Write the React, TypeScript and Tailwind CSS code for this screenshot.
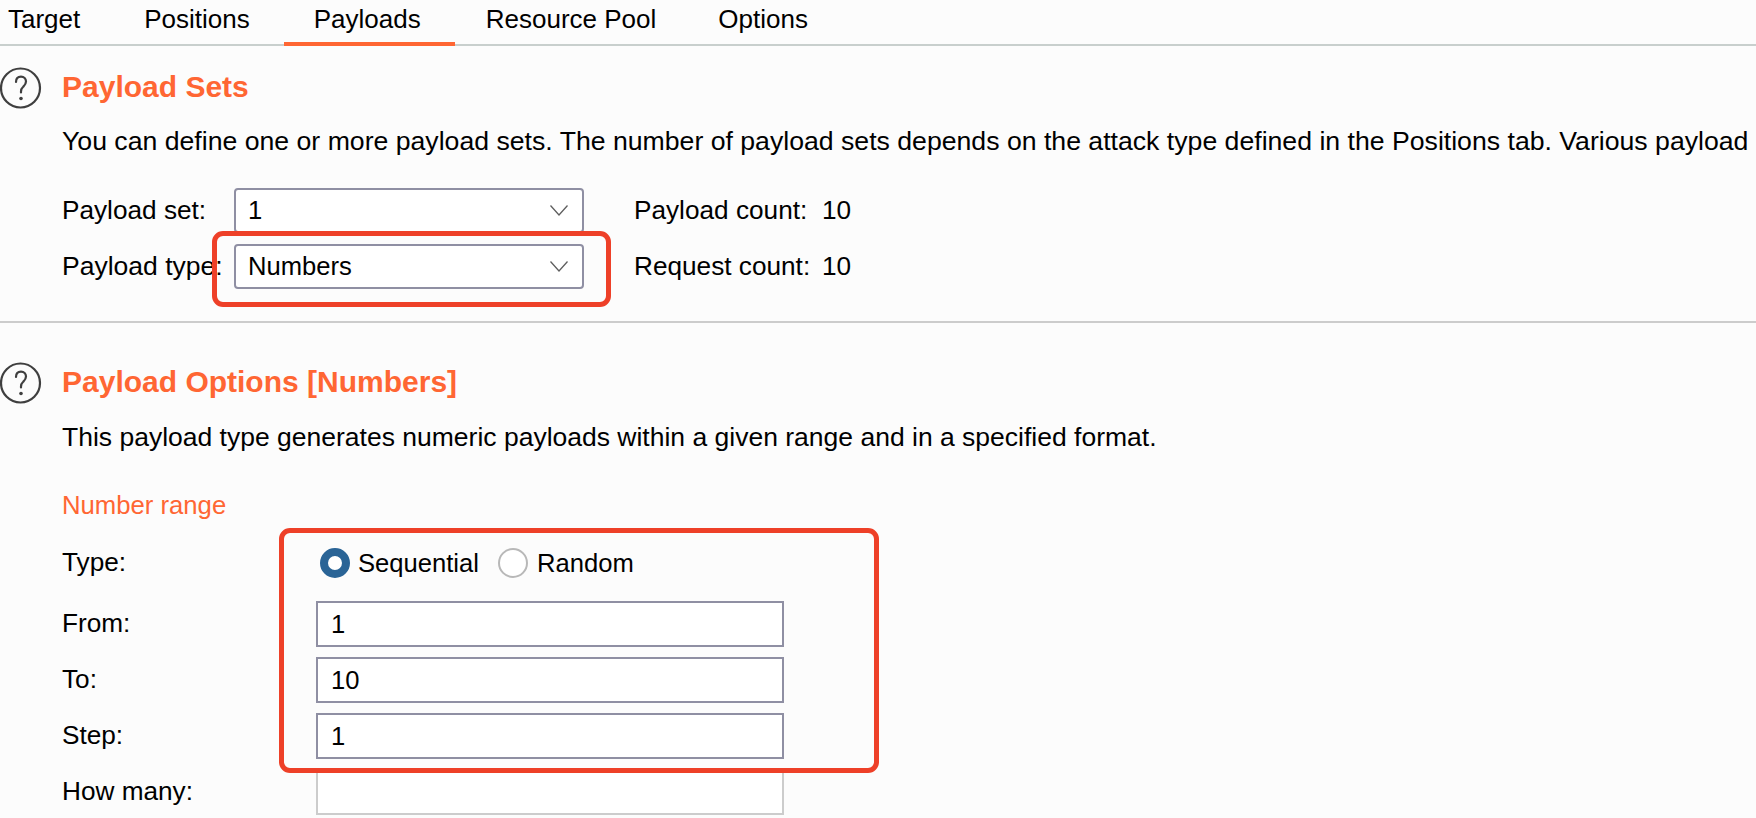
import React from 'react';

function HelpIcon() {
    return (
        <svg width="42" height="44" viewBox="0 0 42 44" fill="none" className="shrink-0">
            <circle cx="20.5" cy="22" r="19.5" stroke="#3f3f3f" strokeWidth="2.2" />
            <path d="M16 16c0-3.4 2-5.4 5-5.4s5 2 5 4.9c0 2.6-1.4 3.9-2.8 5.3-1.3 1.2-2.2 2.4-2.2 4.7v1" stroke="#3f3f3f" strokeWidth="2.2" strokeLinecap="round" />
            <circle cx="21" cy="32.5" r="1.8" fill="#3f3f3f" />
        </svg>
    );
}

function Chevron() {
    return (
        <svg width="18" height="11" viewBox="0 0 18 11" fill="none">
            <path d="M0.5 0.5L9 10L17.5 0.5" stroke="#5f5f5f" strokeWidth="1.3" />
        </svg>
    );
}

function Select({ value }: { value: string }) {
    return (
        <div className="w-[350px] h-[45px] flex items-center justify-between pl-[12px] pr-[14px] bg-white border-2 border-[#8f8fa3] rounded-[4px] text-[25.6px]">
            <span>{value}</span>
            <Chevron />
        </div>
    );
}

function Field({ label, value }: { label: string; value: string }) {
    return (
        <div className="flex items-center h-[46px]">
            <span className="w-[254px]">{label}</span>
            <div className="w-[468px] h-[46px] flex items-center pl-[13px] bg-white border-2 border-[#8f8fa3] text-[25.6px]">{value}</div>
        </div>
    );
}

function App() {
    const tabs = [
        { name: 'Target', pad: 'pl-[8px] pr-[32px]' },
        { name: 'Positions', pad: 'pl-[32px] pr-[34px]' },
        { name: 'Payloads', pad: 'pl-[30px] pr-[34px]' },
        { name: 'Resource Pool', pad: 'pl-[31px] pr-[32px]' },
        { name: 'Options', pad: 'pl-[30px] pr-[32px]' },
    ];

    return (
        <div className="w-[1756px] h-[818px] overflow-hidden bg-[#fcfcfc] text-black text-[26.2px] font-['Liberation_Sans',Arial,sans-serif]">
            <div className="flex h-[46px] border-b-2 border-[#c8cfcd] text-[26px]">
                {tabs.map((tab) => (
                    <div
                        key={tab.name}
                        className={
                            tab.pad + ' ' +
                            (tab.name === 'Payloads' ? 'h-[46px] border-b-4 border-[#ff6633] ' : 'h-[44px] ') +
                            'pt-[3px] leading-[32px]'
                        }
                    >
                        {tab.name}
                    </div>
                ))}
            </div>

            <div className="h-[277px] border-b-2 border-[#cccccc]">
                <div className="flex items-center gap-[20px] pt-[20px]">
                    <HelpIcon />
                    <h2 className="font-bold text-[#ff6633] text-[30px] leading-[42px] pb-[2px]">Payload Sets</h2>
                </div>
                <p className="pl-[62px] mt-[15px] leading-[32px] whitespace-nowrap text-[26.65px]">
                    You can define one or more payload sets. The number of payload sets depends on the attack type defined in the Positions tab. Various payload
                </p>
                <div className="relative pl-[62px] mt-[31px] w-fit">
                    <div className="grid grid-cols-[172px_350px_50px_188px_auto] gap-y-[11px] items-center">
                        <span>Payload set:</span>
                        <Select value="1" />
                        <span />
                        <span>Payload count:</span>
                        <span>10</span>
                        <span className="text-[26.5px]">Payload type:</span>
                        <Select value="Numbers" />
                        <span />
                        <span>Request count:</span>
                        <span>10</span>
                    </div>
                    <div className="absolute left-[212px] top-[43px] w-[399px] h-[76px] border-[5px] border-[#ee4028] rounded-[11px]" />
                </div>
            </div>

            <div className="flex items-center gap-[20px] pt-[38px]">
                <HelpIcon />
                <h2 className="font-bold text-[#ff6633] text-[30px] leading-[42px] pb-[2px]">Payload Options [Numbers]</h2>
            </div>
            <p className="pl-[62px] mt-[16px] leading-[32px] whitespace-nowrap text-[26.5px]">
                This payload type generates numeric payloads within a given range and in a specified format.
            </p>
            <div className="pl-[62px] mt-[36px] leading-[32px] text-[#ff6633] text-[25.7px]">Number range</div>

            <div className="relative pl-[62px] mt-[20px]">
                <div className="flex items-center h-[44px]">
                    <span className="w-[258px]">Type:</span>
                    <span className="w-[30px] h-[30px] rounded-full bg-white border-[8px] border-[#2a6496]" />
                    <span className="ml-[8px] text-[25.6px]">Sequential</span>
                    <span className="ml-[19px] w-[30px] h-[30px] rounded-full bg-white border-2 border-[#b8b8b8]" />
                    <span className="ml-[9px] text-[25.6px]">Random</span>
                </div>
                <div className="mt-[16px] flex flex-col gap-[10px]">
                    <Field label="From:" value="1" />
                    <Field label="To:" value="10" />
                    <Field label="Step:" value="1" />
                    <div className="flex items-center h-[46px]">
                        <span className="w-[254px]">How many:</span>
                        <div className="w-[468px] h-[46px] bg-white border-2 border-[#cccccc]" />
                    </div>
                </div>
                <div className="absolute left-[279px] top-[-13px] w-[600px] h-[245px] border-[5px] border-[#ee4028] rounded-[11px]" />
            </div>
        </div>
    );
}

export default App;
